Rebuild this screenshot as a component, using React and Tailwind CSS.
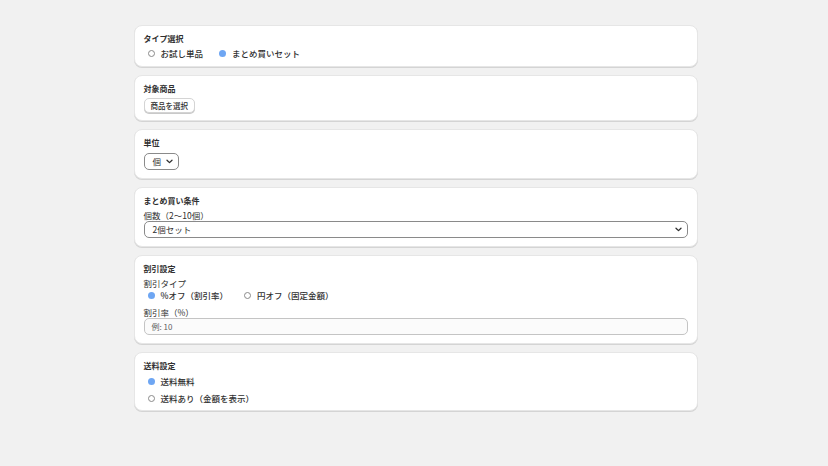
import React from 'react';

const font = { fontFamily: '"Noto Sans CJK JP", "Noto Sans", sans-serif' };
const card = "bg-white rounded-[8px] border border-[#e6e6e6] shadow-[0_1px_0_#d4d4d4] px-[9px] pt-[7px]";
const title = "text-[8px] leading-[11px] font-bold text-[#303030]";
const label = "text-[8.5px] leading-[11px] text-[#303030]";

function Radio({ checked, children }) {
  return (
    <div className="flex items-center h-[12px]">
      {checked ? (
        <span className="ml-[4px] w-[7px] h-[7px] rounded-full bg-[#6ea6f3]" />
      ) : (
        <span className="ml-[4px] w-[7px] h-[7px] rounded-full border border-[#8a8a8a] bg-white" />
      )}
      <span className="ml-[6px] text-[8.5px] leading-[12px] font-medium text-[#303030]">{children}</span>
    </div>
  );
}

function Chevron() {
  return (
    <svg width="7" height="5" viewBox="0 0 7 5" fill="none" className="block">
      <path d="M1 1.2 L3.5 3.6 L6 1.2" stroke="#303030" strokeWidth="1.3" strokeLinecap="round" strokeLinejoin="round" />
    </svg>
  );
}

export default function App() {
  return (
    <div className="min-h-[466px] bg-[#f1f1f1] pt-[25px] pl-[3px] flex justify-center" style={font}>
      <div className="w-[564px] flex flex-col gap-[8px]">
        <div className={`${card} pb-[7px]`}>
          <div className={title}>タイプ選択</div>
          <div className="mt-[3px] flex items-center gap-[12px]">
            <Radio>お試し単品</Radio>
            <Radio checked>まとめ買いセット</Radio>
          </div>
        </div>

        <div className={`${card} pb-[7px]`}>
          <div className={title}>対象商品</div>
          <div className="mt-[4px] flex">
            <div className="h-[15px] px-[6px] rounded-[5px] border border-[#d4d4d4] shadow-[0_1px_0_#c9c9c9] bg-white flex items-center text-[7.5px] leading-[13px] font-medium text-[#303030]">
              商品を選択
            </div>
          </div>
        </div>

        <div className={`${card} pb-[8px]`}>
          <div className={title}>単位</div>
          <div className="mt-[5px] w-[35px] h-[17px] rounded-[5px] border border-[#8a8a8a] flex items-center pl-[8px] pr-[5px] justify-between">
            <span className="text-[8.5px] leading-[11px] text-[#303030]">個</span>
            <Chevron />
          </div>
        </div>

        <div className={`${card} pb-[8px]`}>
          <div className={title}>まとめ買い条件</div>
          <div className={`${label} mt-[4px]`}>個数（2〜10個）</div>
          <div className="h-[17px] rounded-[5px] border border-[#8a8a8a] flex items-center pl-[8px] pr-[5px] justify-between">
            <span className="text-[8.5px] leading-[11px] text-[#303030]">2個セット</span>
            <Chevron />
          </div>
        </div>

        <div className={`${card} pb-[8px]`}>
          <div className={title}>割引設定</div>
          <div className={`${label} mt-[4px]`}>割引タイプ</div>
          <div className="flex items-center gap-[12px]">
            <Radio checked>%オフ（割引率）</Radio>
            <Radio>円オフ（固定金額）</Radio>
          </div>
          <div className={`${label} mt-[6px]`}>割引率（%）</div>
          <div className="h-[17px] rounded-[5px] border border-[#c4c4c4] bg-[#fbfbfb] flex items-center pl-[7px]">
            <span className="text-[8px] leading-[11px] text-[#616161]">例: 10</span>
          </div>
        </div>

        <div className={`${card} pb-[6px]`}>
          <div className={title}>送料設定</div>
          <div className="mt-[4px] flex flex-col gap-[5px]">
            <Radio checked>送料無料</Radio>
            <Radio>送料あり（金額を表示）</Radio>
          </div>
        </div>
      </div>
    </div>
  );
}
